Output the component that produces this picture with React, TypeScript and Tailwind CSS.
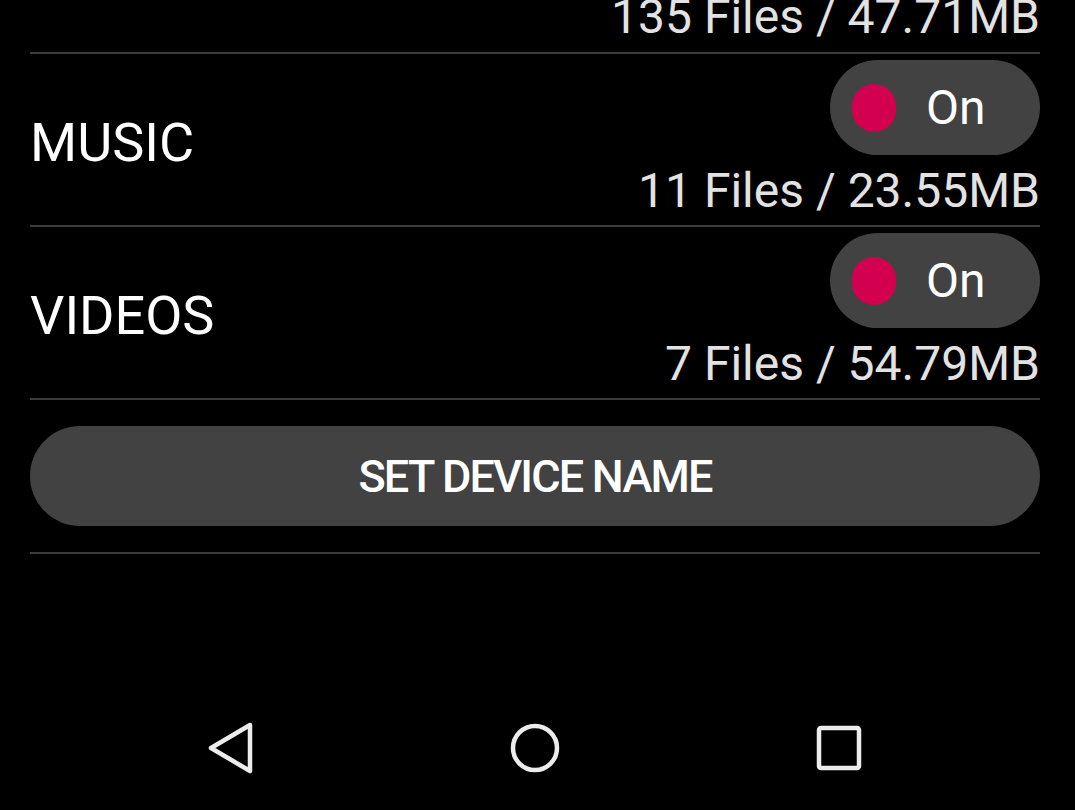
import React from 'react';

type Folder = {
  name: string;
  files: string;
};

const folders: Folder[] = [
  { name: 'MUSIC', files: '11 Files / 23.55MB' },
  { name: 'VIDEOS', files: '7 Files / 54.79MB' },
];

function Divider() {
  return <div className="ml-[30px] mr-[35px] h-[2px] bg-[#3c3c3c]" />;
}

function Toggle() {
  return (
    <div className="flex h-[95px] w-[210px] items-center rounded-full bg-[#424242]">
      <div className="ml-[22px] h-[48px] w-[44px] rounded-full bg-[#d3004f]" />
      <span className="ml-[30px] text-[48px] leading-none text-white">On</span>
    </div>
  );
}

function FolderRow({ folder }: { folder: Folder }) {
  return (
    <div className="flex h-[171px] items-center justify-between pl-[30px] pr-[35px]">
      <span className="pt-[7px] text-[54px] leading-none text-white">{folder.name}</span>
      <div className="flex h-full flex-col items-end pt-[6px]">
        <Toggle />
        <span className="mt-[8px] text-[48px] leading-[56px] text-[#e2e2e2]">{folder.files}</span>
      </div>
    </div>
  );
}

export default function App() {
  return (
    <div className="flex h-[810px] w-[1075px] flex-col overflow-hidden bg-black font-['Roboto',sans-serif]">
      {/* tail of the previous row */}
      <div className="flex h-[52px] items-end justify-end pr-[35px] pb-[7px]">
        <span className="text-[48px] leading-[56px] text-[#e2e2e2]">135 Files / 47.71MB</span>
      </div>
      <Divider />

      {folders.map((f) => (
        <React.Fragment key={f.name}>
          <FolderRow folder={f} />
          <Divider />
        </React.Fragment>
      ))}

      <div className="pl-[30px] pr-[35px] py-[26px]">
        <button className="flex h-[100px] w-full items-center justify-center rounded-full bg-[#424242]">
          <span className="text-[45px] font-medium leading-none tracking-[-1.8px] text-white">SET DEVICE NAME</span>
        </button>
      </div>
      <Divider />

      <div className="flex-1" />

      {/* nav bar */}
      <div className="flex h-[96px] items-center justify-center pr-[5px] pb-[29px]">
        <div className="flex w-[304px] justify-center">
          <svg width="48" height="52" viewBox="0 0 48 52" fill="none" stroke="#ececec" strokeWidth="4.5" strokeLinejoin="round">
            <path d="M43 3 L4 26 L43 49 Z" />
          </svg>
        </div>
        <div className="flex w-[304px] justify-center">
          <svg width="52" height="52" viewBox="0 0 52 52" fill="none" stroke="#ececec" strokeWidth="4.5">
            <circle cx="26" cy="26" r="22" />
          </svg>
        </div>
        <div className="flex w-[304px] justify-center">
          <svg width="46" height="46" viewBox="0 0 46 46" fill="none" stroke="#ececec" strokeWidth="4.5">
            <rect x="3" y="3" width="40" height="40" rx="2" />
          </svg>
        </div>
      </div>
    </div>
  );
}
